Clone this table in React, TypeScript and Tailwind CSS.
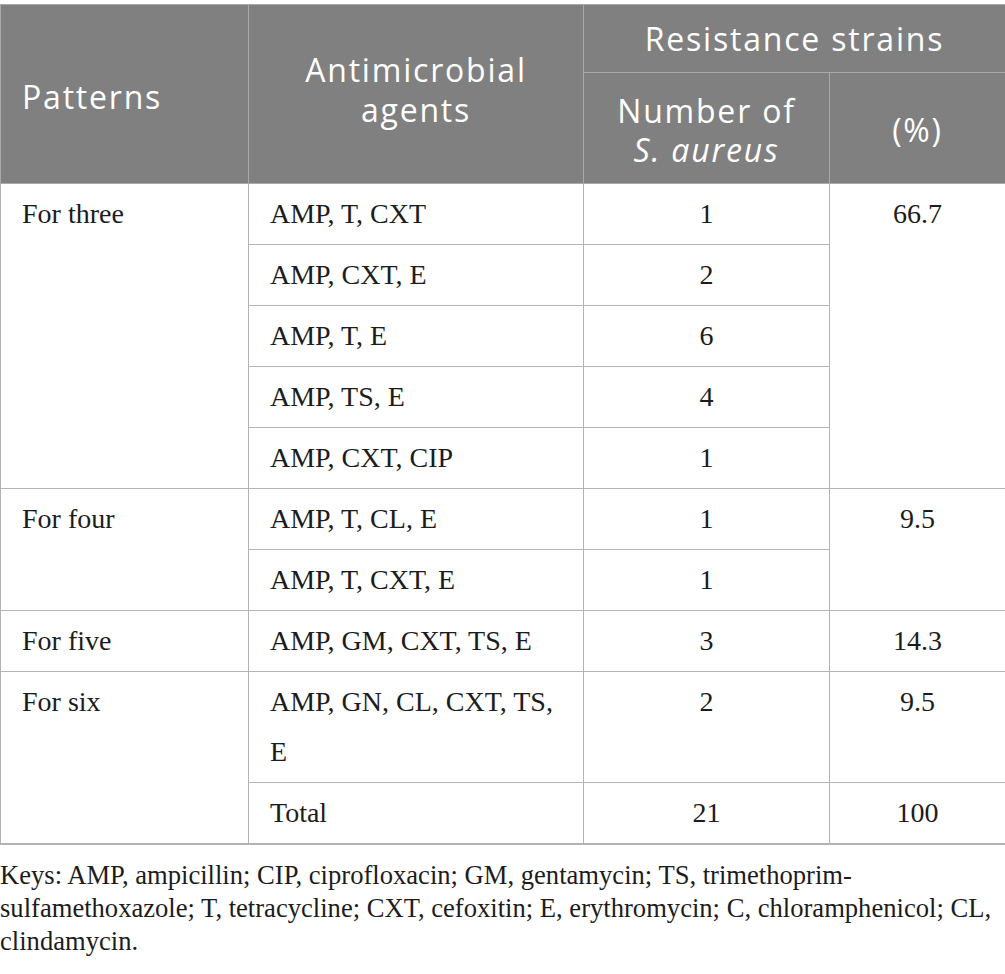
import React from "react";

const serif = "font-['Liberation_Serif','Times_New_Roman',serif]";
const sans = "font-['Open_Sans','Noto_Sans',sans-serif]";

const td = "border border-[#b4b4b4] align-top py-[5px] leading-[50px] text-[28px] text-[#1c1c1c]";

export default function App() {
  return (
    <div className="w-[1005px] bg-white pt-[4px]">
      <table className={`w-[1005px] table-fixed border-collapse ${serif}`}>
        <colgroup>
          <col className="w-[248px]" />
          <col className="w-[335px]" />
          <col className="w-[246px]" />
          <col className="w-[176px]" />
        </colgroup>
        <thead className={`${sans} bg-[#808080] text-white text-[32px] tracking-[1.8px] font-normal`}>
          <tr className="h-[68px]">
            <th rowSpan={2} className="border border-[#a8a8a8] text-left align-middle pl-[21px] font-normal leading-[40px] pt-[6px]">
              Patterns
            </th>
            <th rowSpan={2} className="border border-[#a8a8a8] text-center align-middle font-normal leading-[40px] pb-[8px]">
              Antimicrobial
              <br />
              agents
            </th>
            <th colSpan={2} className="border border-[#a8a8a8] text-center align-middle font-normal leading-[40px]">
              Resistance strains
            </th>
          </tr>
          <tr className="h-[111px]">
            <th className="border border-[#a8a8a8] text-center align-middle font-normal leading-[39px] pt-[4px]">
              Number of
              <br />
              <i>S. aureus</i>
            </th>
            <th className="border border-[#a8a8a8] text-center align-middle font-normal leading-[40px] pt-[4px]">
              (%)
            </th>
          </tr>
        </thead>
        <tbody>
          <tr>
            <td rowSpan={5} className={`${td} pl-[21px]`}>For three</td>
            <td className={`${td} pl-[21px]`}>AMP, T, CXT</td>
            <td className={`${td} text-center`}>1</td>
            <td rowSpan={5} className={`${td} text-center`}>66.7</td>
          </tr>
          <tr>
            <td className={`${td} pl-[21px]`}>AMP, CXT, E</td>
            <td className={`${td} text-center`}>2</td>
          </tr>
          <tr>
            <td className={`${td} pl-[21px]`}>AMP, T, E</td>
            <td className={`${td} text-center`}>6</td>
          </tr>
          <tr>
            <td className={`${td} pl-[21px]`}>AMP, TS, E</td>
            <td className={`${td} text-center`}>4</td>
          </tr>
          <tr>
            <td className={`${td} pl-[21px]`}>AMP, CXT, CIP</td>
            <td className={`${td} text-center`}>1</td>
          </tr>
          <tr>
            <td rowSpan={2} className={`${td} pl-[21px]`}>For four</td>
            <td className={`${td} pl-[21px]`}>AMP, T, CL, E</td>
            <td className={`${td} text-center`}>1</td>
            <td rowSpan={2} className={`${td} text-center`}>9.5</td>
          </tr>
          <tr>
            <td className={`${td} pl-[21px]`}>AMP, T, CXT, E</td>
            <td className={`${td} text-center`}>1</td>
          </tr>
          <tr>
            <td className={`${td} pl-[21px]`}>For five</td>
            <td className={`${td} pl-[21px]`}>AMP, GM, CXT, TS, E</td>
            <td className={`${td} text-center`}>3</td>
            <td className={`${td} text-center`}>14.3</td>
          </tr>
          <tr>
            <td rowSpan={2} className={`${td} pl-[21px] border-b-2`}>For six</td>
            <td className={`${td} pl-[21px]`}>
              AMP, GN, CL, CXT, TS,
              <br />E
            </td>
            <td className={`${td} text-center`}>2</td>
            <td className={`${td} text-center`}>9.5</td>
          </tr>
          <tr>
            <td className={`${td} pl-[21px] border-b-2`}>Total</td>
            <td className={`${td} text-center border-b-2`}>21</td>
            <td className={`${td} text-center border-b-2`}>100</td>
          </tr>
        </tbody>
      </table>
      <div className={`${serif} mt-[14px] text-[26.6px] leading-[33px] text-[#1c1c1c] whitespace-nowrap`}>
        Keys: AMP, ampicillin; CIP, ciprofloxacin; GM, gentamycin; TS, trimethoprim-
        <br />
        sulfamethoxazole; T, tetracycline; CXT, cefoxitin; E, erythromycin; C, chloramphenicol; CL,
        <br />
        clindamycin.
      </div>
    </div>
  );
}
